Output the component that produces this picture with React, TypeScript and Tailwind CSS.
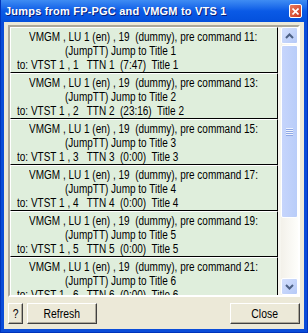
import React from 'react'

type Jump = {
  cmd: number
  vtst: number
  ttn: number
  time: string
}

const jumps: Jump[] = [
  { cmd: 11, vtst: 1, ttn: 1, time: '7:47' },
  { cmd: 13, vtst: 2, ttn: 2, time: '23:16' },
  { cmd: 15, vtst: 3, ttn: 3, time: '0:00' },
  { cmd: 17, vtst: 4, ttn: 4, time: '0:00' },
  { cmd: 19, vtst: 5, ttn: 5, time: '0:00' },
  { cmd: 21, vtst: 6, ttn: 6, time: '0:00' },
]

const font = { fontFamily: '"Liberation Sans", Arial, sans-serif' }

// narrow system font look: squeeze Arial-width glyphs
function Narrow({ children }: { children: React.ReactNode }) {
  return <span className="inline-block origin-left scale-x-[0.8] whitespace-pre">{children}</span>
}

function JumpItem({ jump }: { jump: Jump }) {
  return (
    <div className="h-[46px] shrink-0 overflow-hidden bg-[#dfeedc] border-t border-l border-t-white border-l-white border-b border-r border-b-black border-r-black pt-[2px] text-[12.5px] leading-[14px] text-black">
      <div className="pl-[18px]">
        <Narrow>VMGM , LU 1 (en) , 19  (dummy), pre command {jump.cmd}:</Narrow>
      </div>
      <div className="pl-[54px]">
        <Narrow>(JumpTT) Jump to Title {jump.ttn}</Narrow>
      </div>
      <div className="pl-[6px]">
        <Narrow>
          to: VTST 1 , {jump.vtst}   TTN {jump.ttn}  ({jump.time})  Title {jump.ttn}
        </Narrow>
      </div>
    </div>
  )
}

function ScrollButton({ up }: { up?: boolean }) {
  return (
    <div className="h-[17px] w-[17px] shrink-0 rounded-[2px] border border-white bg-gradient-to-br from-[#d4e0fd] to-[#b5c9f7] flex items-center justify-center">
      <svg width="9" height="6" viewBox="0 0 9 6">
        <path
          d={up ? 'M1 5 L4.5 1.5 L8 5' : 'M1 1 L4.5 4.5 L8 1'}
          stroke="#4d6185"
          strokeWidth="2"
          fill="none"
        />
      </svg>
    </div>
  )
}

function Scrollbar() {
  return (
    <div className="w-[17px] h-full flex flex-col bg-gradient-to-r from-[#f3f1ea] to-[#fefefb]">
      <ScrollButton up />
      <div className="h-[173px] mt-[1px] rounded-[2px] border border-white bg-gradient-to-r from-[#c6d5fc] to-[#b9cdf9] flex flex-col items-center justify-center gap-[1px]">
        {[0, 1, 2, 3].map(i => (
          <div key={i} className="w-[7px] h-[1px] bg-[#eef3fe] shadow-[0_1px_0_#8fa8e6]" />
        ))}
      </div>
      <div className="flex-1" />
      <ScrollButton />
    </div>
  )
}

function WinButton({ children, width }: { children: React.ReactNode; width: string }) {
  return (
    <button
      className={`${width} h-[21px] flex items-center justify-center bg-[#ece9d8] border border-t-white border-l-white border-b-[#404040] border-r-[#404040] shadow-[inset_-1px_-1px_0_#aca899] text-[13px] leading-none text-black`}
      style={font}
    >
      <span className="inline-block scale-x-[0.8]">{children}</span>
    </button>
  )
}

export default function App() {
  return (
    <div className="w-[308px] h-[333px] flex flex-col bg-[#0a4cd8] border-x border-b border-[#0033bb]" style={font}>
      {/* Title bar */}
      <div className="h-[22px] shrink-0 flex items-center justify-between pl-[4px] pr-[5px] bg-gradient-to-b from-[#3f8cf3] via-[#0a5ae6] to-[#0450dc]">
        <span className="text-white font-bold text-[11px] tracking-[0.2px] whitespace-nowrap [text-shadow:1px_1px_0_#0a1f7a]">
          Jumps from FP-PGC and VMGM to VTS 1
        </span>
        <div className="w-[13px] h-[14px] rounded-[2px] border border-white bg-gradient-to-br from-[#e87a5c] to-[#c9321b] flex items-center justify-center">
          <svg width="7" height="7" viewBox="0 0 7 7">
            <path d="M0.5 0.5 L6.5 6.5 M6.5 0.5 L0.5 6.5" stroke="white" strokeWidth="1.6" />
          </svg>
        </div>
      </div>

      {/* Client area */}
      <div className="flex-1 mx-[3px] mb-[3px] bg-[#ece9d8] flex flex-col px-[4px] pt-[3px]">
        <div className="h-[272px] shrink-0 border-2 border-t-[#aca899] border-l-[#aca899] border-b-white border-r-white bg-[#f6f5ef] flex">
          <div className="w-[268px] h-full overflow-hidden flex flex-col">
            {jumps.map(j => (
              <JumpItem key={j.cmd} jump={j} />
            ))}
          </div>
          <div className="w-[3px]" />
          <Scrollbar />
        </div>

        <div className="mt-[6px] flex items-center">
          <WinButton width="w-[15px]">?</WinButton>
          <div className="w-[4px]" />
          <WinButton width="w-[70px]">Refresh</WinButton>
          <div className="flex-1" />
          <WinButton width="w-[70px]">Close</WinButton>
        </div>
      </div>
    </div>
  )
}
